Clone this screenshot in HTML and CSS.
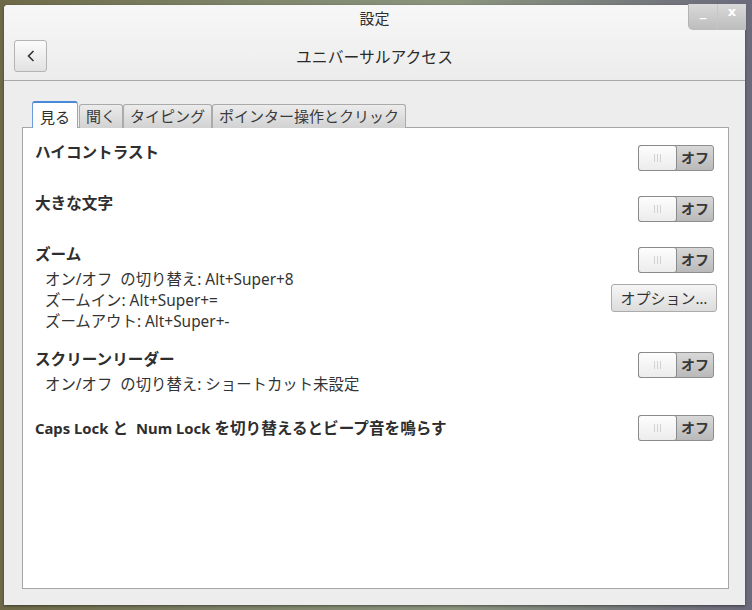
FILE: index.html
```html
<!DOCTYPE html>
<html lang="ja">
<head>
	<meta charset="UTF-8">
	<title>設定</title>
	<link rel="stylesheet" href="styles.css">
</head>
<body>
<div class="window">
	<div class="header">
		<div class="titlebar">
			設定
			<div class="wm-buttons">
				<span class="wm-min">_</span>
				<span class="wm-close">x</span>
			</div>
		</div>
		<div class="toolbar">
			<a class="back">
				<svg width="10" height="14" viewBox="0 0 10 14"><path d="M7.5 2 L2.5 7 L7.5 12" fill="none" stroke="#333" stroke-width="1.6"/></svg>
			</a>
			<h1>ユニバーサルアクセス</h1>
			<span class="spacer"></span>
		</div>
	</div>

	<div class="main">
		<div class="tabs">
			<span class="tab active">見る</span>
			<span class="tab">聞く</span>
			<span class="tab">タイピング</span>
			<span class="tab">ポインター操作とクリック</span>
		</div>
		<div class="panel">
			<div class="row">
				<div class="row-text"><h2>ハイコントラスト</h2></div>
				<div class="row-ctrl">
					<div class="switch"><span class="knob"><i></i><i></i><i></i></span><span class="state">オフ</span></div>
				</div>
			</div>

			<div class="row">
				<div class="row-text"><h2>大きな文字</h2></div>
				<div class="row-ctrl">
					<div class="switch"><span class="knob"><i></i><i></i><i></i></span><span class="state">オフ</span></div>
				</div>
			</div>

			<div class="row tall">
				<div class="row-text">
					<h2>ズーム</h2>
					<ul class="keys">
						<li>オン/オフ&nbsp; の切り替え:&nbsp;Alt+Super+8</li>
						<li>ズームイン:&nbsp;Alt+Super+=</li>
						<li>ズームアウト:&nbsp;Alt+Super+-</li>
					</ul>
				</div>
				<div class="row-ctrl">
					<div class="switch"><span class="knob"><i></i><i></i><i></i></span><span class="state">オフ</span></div>
					<a class="button">オプション…</a>
				</div>
			</div>

			<div class="row tall">
				<div class="row-text">
					<h2>スクリーンリーダー</h2>
					<ul class="keys">
						<li>オン/オフ&nbsp; の切り替え:&nbsp;ショートカット未設定</li>
					</ul>
				</div>
				<div class="row-ctrl">
					<div class="switch"><span class="knob"><i></i><i></i><i></i></span><span class="state">オフ</span></div>
				</div>
			</div>

			<div class="row center">
				<div class="row-text"><h2><span class="latin">Caps Lock</span> と&nbsp; <span class="latin">Num Lock</span> を切り替えるとビープ音を鳴らす</h2></div>
				<div class="row-ctrl">
					<div class="switch"><span class="knob"><i></i><i></i><i></i></span><span class="state">オフ</span></div>
				</div>
			</div>
		</div>
	</div>
</div>
</body>
</html>
```

FILE: styles.css
```css
html, body {
    height: 100%;
}

body {
    margin: 0;
    overflow: hidden;
    font: 15px "Noto Sans", "Noto Sans CJK JP", sans-serif;
    color: #2e3436;
    background: linear-gradient(90deg, #6e6a48 0, #7d8368 30%, #8b957e 60%, #6b6a7c 100%);
}

.window {
    display: flex;
    flex-direction: column;
    width: 741px;
    height: 600px;
    margin: 5px 0 0 4px;
    background: #ededed;
    border-radius: 4px 4px 0 0;
    box-shadow: 0 1px 3px rgba(0, 0, 0, .45);
}

/* header */
.header {
    border-bottom: 1px solid #a9a9a9;
    border-radius: 4px 4px 0 0;
    background: linear-gradient(#f7f7f7, #ececec);
}

.titlebar {
    position: relative;
    height: 26px;
    line-height: 26px;
    text-align: center;
    font-size: 15px;
    color: #2e2e2e;
}

.wm-buttons {
    position: absolute;
    top: -1px;
    right: -1px;
    display: flex;
    line-height: 24px;
}

.wm-buttons span {
    width: 28px;
    height: 26px;
    font: bold 13px "DejaVu Sans", sans-serif;
    color: #fff;
    text-align: center;
    background: linear-gradient(#d9d9d9, #bcbcbc);
    border-left: 1px solid #c6c6c6;
}

.wm-buttons .wm-min {
    border-radius: 0 0 0 5px;
    border-left: 1px solid #b3b3b3;
}

.toolbar {
    display: flex;
    align-items: center;
    height: 49px;
    padding: 1px 10px 0;
    box-sizing: border-box;
}

.back {
    display: flex;
    align-items: center;
    justify-content: center;
    width: 31px;
    height: 30px;
    border: 1px solid #b4b4b4;
    border-radius: 3px;
    background: linear-gradient(#fbfbfb, #e2e2e2);
}

.toolbar h1 {
    flex: 1;
    margin: 0;
    text-align: center;
    font-size: 15.8px;
    font-weight: normal;
    color: #2a2a2a;
}

.spacer {
    width: 33px;
}

/* tabs + panel */
.main {
    flex: 1;
    display: flex;
    flex-direction: column;
    padding: 20px 16px 16px 18px;
}

.tabs {
    display: flex;
    align-items: flex-end;
    margin-left: 10px;
    margin-bottom: -1px;
    position: relative;
    z-index: 1;
}

.tab {
    height: 23px;
    line-height: 23px;
    padding: 0 6px;
    font-size: 15px;
    color: #3a3a3a;
    border: 1px solid #aaa;
    border-bottom: none;
    border-radius: 3px 3px 0 0;
    background: linear-gradient(#ececec, #d2d2d2);
}

.tab.active {
    height: 25px;
    line-height: 28px;
    padding: 0 7px;
    margin-right: 1px;
    color: #2e2e2e;
    border-color: #5b8ed6 #a6a6a6 #fff #6c9bdc;
    border-top: 2px solid #4a88d8;
    background: linear-gradient(#fff, #fafafa);
}

.panel {
    flex: 1;
    padding: 17px 11px 0 12px;
    background: #fff;
    border: 1px solid #a6a6a6;
}

.row {
    display: flex;
    justify-content: space-between;
    align-items: flex-start;
    margin-bottom: 25px;
}

.row.tall {
    margin-bottom: 20px;
}

.row.center {
    align-items: center;
}

.row h2 {
    height: 20px;
    margin: -3px 0 0;
    font-size: 15.6px;
    line-height: 20px;
    font-weight: bold;
    color: #2e2e2e;
}

.row h2 .latin {
    font-size: 14.8px;
}

.row.center h2 {
    margin: 0;
}

.keys {
    list-style: none;
    margin: 5px 0 0;
    padding: 0 0 0 10px;
    font-size: 15.4px;
    color: #333;
}

.keys li {
    height: 21px;
    line-height: 21px;
}

.row-ctrl {
    display: flex;
    flex-direction: column;
    align-items: flex-end;
    gap: 11px;
}

/* switch */
.switch {
    display: flex;
    width: 76px;
    height: 26px;
    margin-right: 3px;
    box-sizing: border-box;
    border: 1px solid #8e8e8e;
    border-radius: 3px;
    background: linear-gradient(#d8d8d8, #b9b9b9);
}

.knob {
    display: flex;
    align-items: center;
    justify-content: center;
    gap: 2px;
    width: 37px;
    margin: -1px 0 -1px -1px;
    border: 1px solid #8a8a8a;
    border-radius: 3px;
    background: linear-gradient(#fdfdfd, #ececec);
}

.knob i {
    width: 1px;
    height: 8px;
    background: #d2d2d2;
}

.state {
    flex: 1;
    line-height: 24px;
    text-align: center;
    font-size: 14px;
    font-weight: bold;
    color: #383838;
}

.button {
    display: block;
    width: 106px;
    height: 28px;
    box-sizing: border-box;
    line-height: 26px;
    text-align: center;
    font-size: 15px;
    color: #333;
    border: 1px solid #ababab;
    border-radius: 3px;
    background: linear-gradient(#f6f6f6, #dcdcdc);
}
```
